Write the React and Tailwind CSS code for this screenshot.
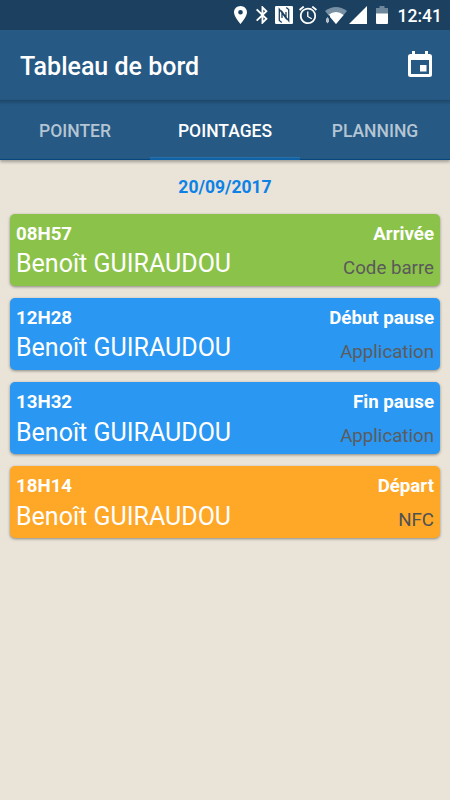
const tabs = [
  { label: 'POINTER', active: false },
  { label: 'POINTAGES', active: true },
  { label: 'PLANNING', active: false }
];

const entries = [
  { time: '08H57', name: 'Benoît GUIRAUDOU', type: 'Arrivée', source: 'Code barre', color: 'bg-[#8bc34a]', sourceColor: 'text-[#5a5a5a]' },
  { time: '12H28', name: 'Benoît GUIRAUDOU', type: 'Début pause', source: 'Application', color: 'bg-[#2a97f2]', sourceColor: 'text-[#5c5c5c]' },
  { time: '13H32', name: 'Benoît GUIRAUDOU', type: 'Fin pause', source: 'Application', color: 'bg-[#2a97f2]', sourceColor: 'text-[#5c5c5c]' },
  { time: '18H14', name: 'Benoît GUIRAUDOU', type: 'Départ', source: 'NFC', color: 'bg-[#ffa727]', sourceColor: 'text-[#4d5254]' }
];

function StatusBar() {
  return (
    <div className="flex h-[30px] items-center justify-end bg-[#1b4060] pr-2 text-white">
      <svg className="mr-[9px] h-[18px] w-[13px]" viewBox="5 2 14 20" preserveAspectRatio="none" fill="currentColor">
        <path d="M12 2C8.13 2 5 5.13 5 9c0 5.25 7 13 7 13s7-7.75 7-13c0-3.87-3.13-7-7-7zm0 9.5a2.5 2.5 0 0 1 0-5 2.5 2.5 0 0 1 0 5z" />
      </svg>
      <svg className="mr-[7px] h-[18px] w-[12px]" viewBox="5 2 13 20" preserveAspectRatio="none" fill="currentColor">
        <path d="M17.71 7.71L12 2h-1v7.59L6.41 5 5 6.41 10.59 12 5 17.59 6.41 19 11 14.41V22h1l5.71-5.71-4.3-4.29 4.3-4.29zM13 5.83l1.88 1.88L13 9.59V5.83zm1.88 10.46L13 18.17v-3.76l1.88 1.88z" />
      </svg>
      <svg className="mr-[6px] h-[18px] w-[18px]" viewBox="0 0 18 18">
        <rect width="18" height="18" rx="1.2" fill="#fff" />
        <path
          d="M6.800 16.500L4.300 14.500V3.200L11 12.300V6M11.200 1.500L13.700 3.500V14.800L7 5.700V12"
          fill="none"
          stroke="#1b4060"
          strokeWidth="1.300"
        />
      </svg>
      <svg className="mr-[8px] h-[18px] w-[18px]" viewBox="2 2 20 20" fill="currentColor">
        <path d="M22 5.72l-4.6-3.86-1.29 1.53 4.6 3.86L22 5.72zM7.88 3.39L6.6 1.86 2 5.71l1.29 1.53 4.59-3.85zM12.5 8H11v6l4.75 2.85.75-1.23-4-2.37V8zM12 4c-4.97 0-9 4.03-9 9s4.02 9 9 9a9 9 0 0 0 0-18zm0 16c-3.87 0-7-3.13-7-7s3.13-7 7-7 7 3.13 7 7-3.13 7-7 7z" />
      </svg>
      <svg className="mr-[2px] h-[18px] w-[22px]" viewBox="0 0 22 18">
        <path d="M0 5Q11-3 22 5L11 18z" fill="#7890a3" />
        <path d="M3.4 9Q11 3 18.6 9L11 18z" fill="#fff" />
        <path d="M0 9.5h5V18H0z" fill="#1b4060" />
        <path d="M1 13l1.5-2L4 13v2.5L2.5 17.5 1 15.5z" fill="#b5c2ce" />
      </svg>
      <svg className="mr-[9px] h-[18px] w-[18px]" viewBox="0 0 18 18" fill="currentColor">
        <path d="M18 0v18H0z" />
      </svg>
      <svg className="mr-[10px] h-[18px] w-[12px]" viewBox="0 0 12 18">
        <path d="M3.5 0h5v2H12v6H0V2h3.500z" fill="#6e879b" />
        <path d="M0 7.500h12V17a1 1 0 0 1-1 1H1a1 1 0 0 1-1-1z" fill="#fff" />
      </svg>
      <span className="pt-[2px] text-[17.5px] leading-[28px] font-medium">12:41</span>
    </div>
  );
}

function CalendarIcon() {
  return (
    <svg className="mb-[2px] h-[26px] w-[24px]" viewBox="0 0 24 26" fill="currentColor">
      <path
        fillRule="evenodd"
        d="M4 0h3v3h10V0h3v3h1.500A2.500 2.500 0 0 1 24 5.500v18a2.500 2.500 0 0 1-2.500 2.500h-19A2.500 2.500 0 0 1 0 23.500v-18A2.500 2.500 0 0 1 2.500 3H4zM3 9v14h18V9z"
      />
      <path d="M12 14h6.500v6.500H12z" />
    </svg>
  );
}

function EntryCard({ entry }) {
  return (
    <li
      className={`flex h-[72px] justify-between rounded-[5px] px-[6px] shadow-[0_1px_3px_rgba(0,0,0,0.4)] ${entry.color}`}
    >
      <div className="flex flex-col text-white">
        <span className="mt-[9px] text-[18.7px] leading-[22px] font-bold">{entry.time}</span>
        <span className="mt-[4.4px] text-[25px] leading-[30px]">{entry.name}</span>
      </div>
      <div className="flex flex-col text-right">
        <span className="mt-[9px] text-[18.7px] leading-[22px] font-bold text-white">{entry.type}</span>
        <span className={`mt-[12px] text-[18.7px] leading-[22px] ${entry.sourceColor}`}>{entry.source}</span>
      </div>
    </li>
  );
}

export default function App() {
  return (
    <div className="h-[800px] w-[450px] overflow-hidden bg-[#e9e3d8] font-[Roboto,sans-serif]">
      <StatusBar />
      <header className="flex h-[70px] items-center justify-between bg-[#265984] pr-[18px] pl-5 text-white">
        <h1 className="pt-1 text-[25px] leading-[30px] font-medium">Tableau de bord</h1>
        <CalendarIcon />
      </header>
      <nav className="grid h-[60px] grid-cols-3 bg-[#265984] shadow-[0_2px_3px_rgba(0,0,0,0.3)]">
        {tabs.map((tab) => (
          <button
            key={tab.label}
            className={
              tab.active
                ? 'border-b-2 border-[#0f62a5] bg-linear-to-b from-[#1d4769] to-[#265984] to-[5px] pt-[4px] text-[17.5px] font-medium text-white shadow-[inset_0_-1px_0_#2b6fa9]'
                : 'border-b border-[#044680] bg-linear-to-b from-[#1d4769] to-[#265984] to-[5px] pt-[3px] text-[17.5px] font-medium text-[#b4c5d4]'
            }
          >
            {tab.label}
          </button>
        ))}
      </nav>
      <main className="px-[10px]">
        <p className="pt-4 text-center text-[17.5px] leading-[22px] font-bold text-[#0c82e6]">20/09/2017</p>
        <ul className="mt-[15.8px] flex flex-col gap-[12.2px]">
          {entries.map((entry) => (
            <EntryCard key={entry.time} entry={entry} />
          ))}
        </ul>
      </main>
    </div>
  );
}
